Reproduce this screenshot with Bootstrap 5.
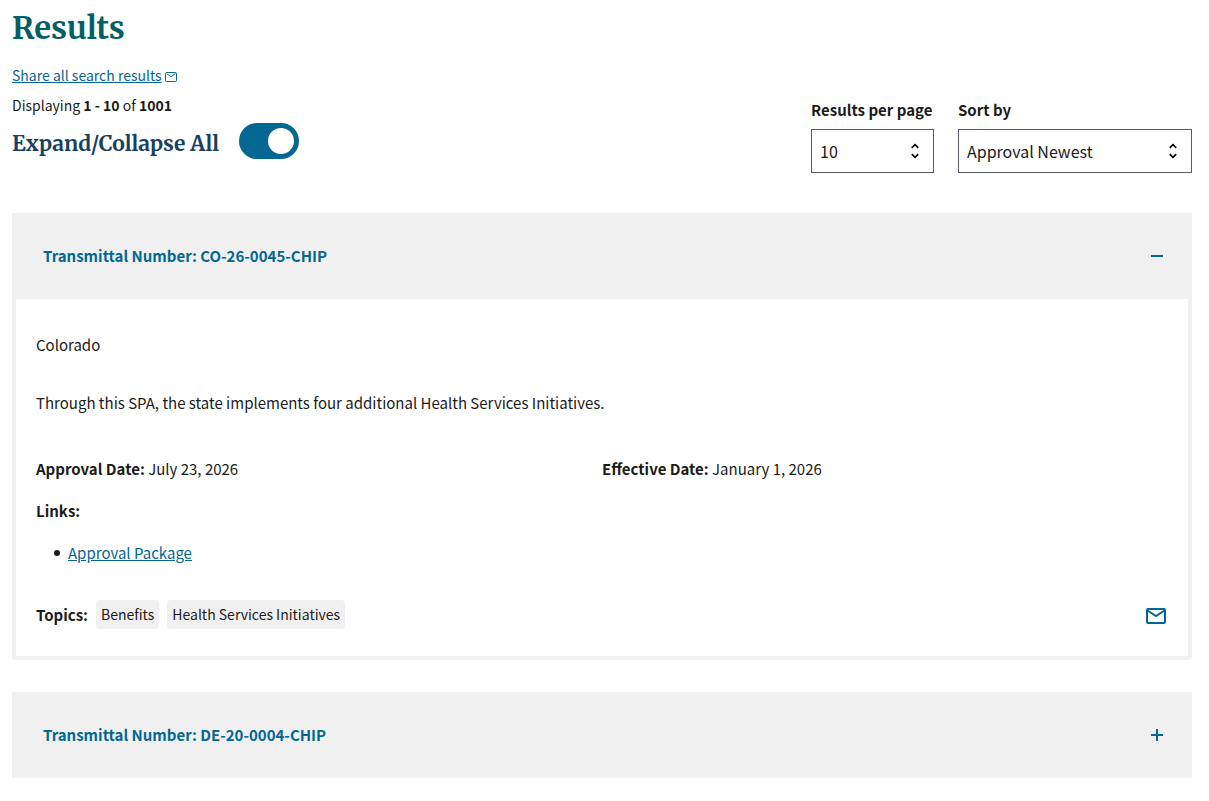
<!DOCTYPE html>
<html lang="en">
<head>
<meta charset="utf-8">
<meta name="viewport" content="width=device-width, initial-scale=1">
<title>Results</title>
<link href="https://cdn.jsdelivr.net/npm/bootstrap@5.3.0/dist/css/bootstrap.min.css" rel="stylesheet">
<style>
  body { font-family: "Source Sans Pro", "Noto Sans CJK SC", sans-serif; font-size: 15px; line-height: 26px; color: #1b1b1b; }
  a { color: #046791; }
  .page-wrap { padding: 8px 17px 24px 12px; }
  .page-title, .toggle-title { font-family: Merriweather, "DejaVu Serif Condensed", "DejaVu Serif", serif; font-weight: 700; margin: 0; }
  .page-title { font-size: 31px; line-height: 40px; color: #046062; }
  .toggle-title { font-size: 21px; line-height: 30px; padding-top: 6px; color: #18405f; }
  .summary { font-size: 14px; line-height: 24px; }
  .share { margin: 15px 0 6px; gap: 3px; }
  .toggle-row { margin: 6px 0 14px; gap: 20px; }
  .form-check-input.switch-lg { width: 60px; height: 36px; margin: 0; border: 0; border-radius: 18px;
    background: #8a8f94 url("data:image/svg+xml,%3csvg xmlns='http://www.w3.org/2000/svg' viewBox='0 0 26 26'%3e%3ccircle cx='13' cy='13' r='13' fill='%23fff'/%3e%3c/svg%3e") 5px center / 26px no-repeat; }
  .form-check-input.switch-lg:checked { background-color: #046791; background-position: right 5px center;
    background-image: url("data:image/svg+xml,%3csvg xmlns='http://www.w3.org/2000/svg' viewBox='0 0 26 26'%3e%3ccircle cx='13' cy='13' r='13' fill='%23fff'/%3e%3c/svg%3e"); }
  .filters { gap: 24px; }
  .filters .form-label { line-height: 24px; margin-bottom: 7px; font-weight: 700; }
  .filters .form-select { height: 44px; padding: 0 32px 0 8px; border: 1px solid #565c65; border-radius: 0; font-size: 16px; color: #1b1b1b;
    background: #fff url("data:image/svg+xml,%3csvg xmlns='http://www.w3.org/2000/svg' viewBox='0 0 24 24'%3e%3cpath d='M12 5.83 15.17 9l1.41-1.41L12 3 7.41 7.59 8.83 9 12 5.83zm0 12.34L8.83 15l-1.41 1.41L12 21l4.59-4.59L15.17 15 12 18.17z'/%3e%3c/svg%3e") right 8px center / 20px no-repeat; }
  .page-select { min-width: 123px; }
  .sort-select { min-width: 234px; }
  .results-list { display: grid; gap: 32px; margin-top: 40px; }
  .result-toggle { width: 100%; height: 86px; padding: 0 28px 0 31px; border: 0; background: #f0f0f0; color: #046791; font-weight: 700; text-align: left; }
  .result-body { border: 4px solid #f0f0f0; border-top: 0; border-radius: 0 0 4px 4px; padding: 33px 20px 27px; }
  .result-body p { margin: 0; }
  .state-name { padding-bottom: 32px; }
  .description { padding-bottom: 40px; }
  .links-block { padding: 16px 0 34px; }
  .links-block ul { margin: 16px 0 0; padding-left: 18px; }
  .links-block li { display: flex; align-items: center; gap: 8px; }
  .links-block li::before { content: ""; width: 6px; height: 6px; border-radius: 50%; background: #1b1b1b; }
  .topic { background: #f0f0f0; border-radius: 4px; padding: 0 5px; font-size: 14px; line-height: 29px; }
  .topics { column-gap: 8px; }
</style>
</head>
<body>
<main class="page-wrap">
  <h1 class="page-title">Results</h1>
  <div class="share summary d-flex align-items-center">
    <a href="#share">Share all search results</a>
    <svg width="12" height="24" viewBox="0 0 12 24" fill="none" stroke="#046791" aria-hidden="true"><rect x=".5" y="9.500" width="11" height="9" rx="1"/><path d="M1.500 10.500 6 13.800l4.500-3.300"/></svg>
  </div>
  <div class="d-flex flex-wrap justify-content-between align-items-end">
    <div>
      <div class="summary">Displaying <b>1 - 10</b> of <b>1001</b></div>
      <div class="toggle-row d-flex align-items-center">
        <label class="toggle-title" for="expandAll">Expand/Collapse All</label>
        <input class="form-check-input switch-lg" type="checkbox" role="switch" id="expandAll" checked>
      </div>
    </div>
    <div class="filters d-flex">
      <div class="page-select">
        <label class="form-label d-block" for="perPage">Results per page</label>
        <select class="form-select" id="perPage"><option>10</option><option>25</option><option>50</option></select>
      </div>
      <div class="sort-select">
        <label class="form-label d-block" for="sortBy">Sort by</label>
        <select class="form-select" id="sortBy"><option>Approval Newest</option><option>Approval Oldest</option></select>
      </div>
    </div>
  </div>

  <div class="results-list">
    <article>
      <button class="result-toggle d-flex align-items-center justify-content-between" type="button" data-bs-toggle="collapse" data-bs-target="#result1" aria-expanded="true" aria-controls="result1">
        Transmittal Number: CO-26-0045-CHIP
        <svg width="14" height="14" viewBox="0 0 14 14" fill="none" stroke="#046791" stroke-width="2" aria-hidden="true"><path d="M1 7h12"/></svg>
      </button>
      <div class="collapse show" id="result1">
        <div class="result-body">
          <p class="state-name">Colorado</p>
          <p class="description">Through this SPA, the state implements four additional Health Services Initiatives.</p>
          <div class="row g-0">
            <div class="col-6"><b>Approval Date:</b> July 23, 2026</div>
            <div class="col-6"><b>Effective Date:</b> January 1, 2026</div>
          </div>
          <div class="links-block">
            <b>Links:</b>
            <ul><li><a href="#package">Approval Package</a></li></ul>
          </div>
          <div class="d-flex align-items-center justify-content-between">
            <div class="topics d-flex flex-wrap align-items-center">
              <b>Topics:</b>
              <span class="topic">Benefits</span>
              <span class="topic">Health Services Initiatives</span>
            </div>
            <a class="d-flex" href="#email" aria-label="Share by email"><svg width="24" height="24" viewBox="0 -1 24 24" fill="none" stroke="#046791" stroke-width="2" aria-hidden="true"><rect x="3" y="5" width="18" height="14" rx="1"/><path d="m3.500 6.500 8.500 5.500 8.500-5.500"/></svg></a>
          </div>
        </div>
      </div>
    </article>
    <article>
      <button class="result-toggle d-flex align-items-center justify-content-between" type="button" aria-expanded="false">
        Transmittal Number: DE-20-0004-CHIP
        <svg width="14" height="14" viewBox="0 0 14 14" fill="none" stroke="#046791" stroke-width="2" aria-hidden="true"><path d="M1 7h12M7 1v12"/></svg>
      </button>
    </article>
  </div>
</main>
<script src="https://cdn.jsdelivr.net/npm/bootstrap@5.3.0/dist/js/bootstrap.bundle.min.js"></script>
</body>
</html>
